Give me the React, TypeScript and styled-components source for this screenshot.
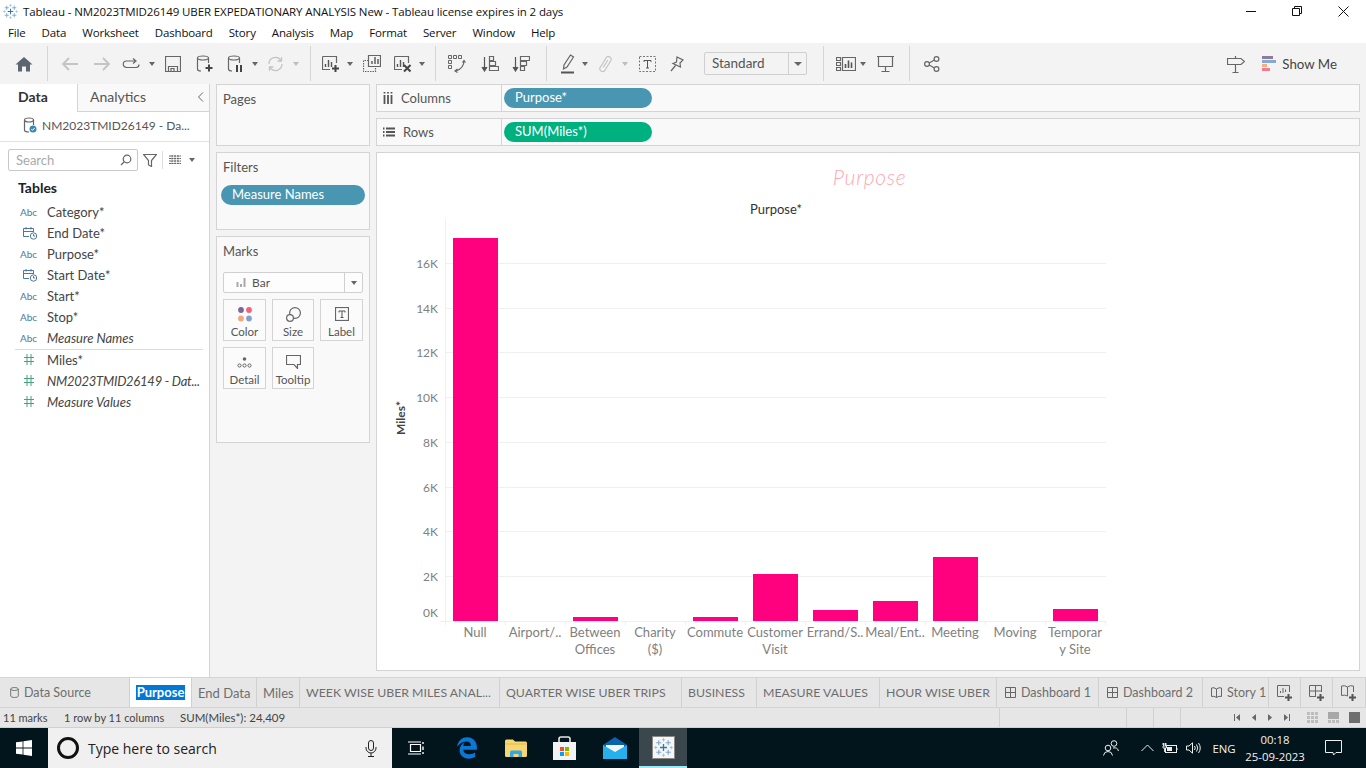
import React from 'react';
import styled, { createGlobalStyle } from 'styled-components';
import { FaEdgeLegacy } from 'react-icons/fa6';

const GlobalStyle = createGlobalStyle`
  html, body { margin: 0; padding: 0; background: #fff; overflow: hidden; }
  * { box-sizing: border-box; }
  svg { display: block; flex-shrink: 0; }
`;

const BOOK = `Lato, "Liberation Sans", sans-serif`;
const UI = `"Open Sans", "Noto Sans", sans-serif`;

const Page = styled.div`
  width: 1366px;
  height: 768px;
  display: flex;
  flex-direction: column;
  overflow: hidden;
  font-family: ${BOOK};
  color: #444;
`;

const TitleBar = styled.div`
  height: 22px;
  display: flex;
  align-items: center;
  padding-left: 3px;
  font-family: ${UI};
  font-size: 11.5px;
  letter-spacing: -0.1px;
  color: #111;
`;
const TitleText = styled.span`
  margin-left: 5px;
  white-space: nowrap;
`;
const WindowButtons = styled.div`
  margin-left: auto;
  display: flex;
  height: 22px;
`;
const WindowButton = styled.div`
  width: 46px;
  display: flex;
  align-items: center;
  justify-content: center;
`;
const MenuBar = styled.div`
  height: 21px;
  display: flex;
  align-items: center;
  gap: 16px;
  padding-left: 8px;
  font-family: ${UI};
  font-size: 11.5px;
  letter-spacing: -0.15px;
  color: #111;
`;
const Toolbar = styled.div`
  height: 41px;
  background: #f3f3f3;
  display: flex;
  align-items: center;
  padding-left: 8px;
`;
const Slot = styled.div<{ $w: number }>`
  width: ${p => p.$w}px;
  height: 24px;
  display: flex;
  align-items: center;
  justify-content: center;
  flex-shrink: 0;
`;
const Sep = styled.div<{ $w: number }>`
  width: ${p => p.$w}px;
  display: flex;
  justify-content: center;
  flex-shrink: 0;
  &::after {
    content: '';
    width: 1px;
    height: 35px;
    background: #d6d6d6;
  }
`;
const Caret = styled.div<{ $w: number; $off?: boolean }>`
  width: ${p => p.$w}px;
  display: flex;
  justify-content: center;
  flex-shrink: 0;
  &::after {
    content: '';
    border-left: 3.5px solid transparent;
    border-right: 3.5px solid transparent;
    border-top: 4px solid ${p => (p.$off ? '#bdbdbd' : '#666')};
  }
`;
const Dropdown = styled.div`
  width: 103px;
  height: 23px;
  margin: 0 0 0 11px;
  border: 1px solid #cfcfcf;
  border-radius: 2px;
  display: flex;
  align-items: center;
  font-size: 13.5px;
  color: #555;
  padding: 0 0 0 7px;
  flex-shrink: 0;
`;
const DropLabel = styled.span`
  flex: 1;
  padding-bottom: 1px;
`;
const DropArrow = styled.div`
  width: 18px;
  height: 21px;
  border-left: 1px solid #cfcfcf;
  display: flex;
  align-items: center;
  justify-content: center;
  &::after {
    content: '';
    border-left: 4px solid transparent;
    border-right: 4px solid transparent;
    border-top: 4px solid #666;
  }
`;
const ShowMe = styled.div`
  margin-left: auto;
  margin-right: 29px;
  display: flex;
  align-items: center;
  gap: 5px;
  font-size: 13.3px;
  color: #444;
`;

const Main = styled.div`
  height: 593px;
  display: flex;
  background: #f3f3f3;
`;
const DataPane = styled.div`
  width: 210px;
  background: #fff;
  border-right: 1px solid #d4d4d4;
  display: flex;
  flex-direction: column;
  flex-shrink: 0;
`;
const PaneTabs = styled.div`
  height: 28px;
  display: flex;
`;
const DataTab = styled.div`
  width: 77px;
  padding: 4px 0 0 18px;
  font-size: 14px;
  font-weight: 700;
  color: #333;
`;
const AnalyticsTab = styled.div`
  flex: 1;
  border-left: 1px solid #d4d4d4;
  border-bottom: 1px solid #d4d4d4;
  background: #f9f9f9;
  display: flex;
  justify-content: space-between;
  padding: 4px 5px 0 12px;
  font-size: 14px;
  color: #555;
`;
const CollapseMark = styled.svg`
  margin-top: 4px;
`;
const SourceRow = styled.div`
  height: 30px;
  border-bottom: 1px solid #e2e2e2;
  display: flex;
  align-items: center;
  gap: 5px;
  padding: 0 0 3px 23px;
  font-size: 12px;
  color: #555;
  white-space: nowrap;
`;
const SearchRow = styled.div`
  height: 29px;
  display: flex;
  align-items: center;
  padding: 7px 0 0 8px;
`;
const SearchBox = styled.div`
  width: 130px;
  height: 22px;
  border: 1px solid #c9c9c9;
  border-radius: 2px;
  display: flex;
  align-items: center;
  justify-content: space-between;
  padding: 0 5px 0 7px;
  font-size: 13px;
  color: #a9a9a9;
`;
const SearchDivider = styled.div`
  width: 1px;
  height: 18px;
  background: #ddd;
`;
const TablesTitle = styled.div`
  padding: 8px 0 0 18px;
  height: 30px;
  font-size: 14px;
  font-weight: 700;
  color: #222;
`;
const FieldRow = styled.div<{ $italic?: boolean; $tight?: boolean }>`
  height: 21px;
  display: flex;
  align-items: center;
  font-size: 13px;
  letter-spacing: ${p => (p.$tight ? '-0.25px' : '0')};
  color: #444;
  font-style: ${p => (p.$italic ? 'italic' : 'normal')};
  white-space: nowrap;
`;
const FieldIcon = styled.div<{ $inset: number }>`
  width: 47px;
  padding-left: ${p => p.$inset}px;
  flex-shrink: 0;
  display: flex;
  align-items: center;
`;
const AbcMark = styled.span`
  font-size: 10px;
  font-style: normal;
  letter-spacing: 0;
  color: #4a7a9c;
`;
const FieldDivider = styled.div`
  height: 1px;
  margin: 1px 6px -1px 15px;
  background: #dcdcdc;
`;

const ShelfColumn = styled.div`
  width: 154px;
  margin-left: 6px;
  display: flex;
  flex-direction: column;
  gap: 6px;
  flex-shrink: 0;
`;
const ShelfCard = styled.div<{ $h: number }>`
  height: ${p => p.$h}px;
  background: #f9f9f9;
  border: 1px solid #d4d4d4;
  padding: 0 4px;
`;
const CardTitle = styled.div`
  padding: 6px 0 0 2px;
  height: 32px;
  font-size: 13px;
  color: #555;
`;
const FilterPill = styled.div`
  height: 20px;
  border-radius: 10px;
  background: #4996b2;
  color: #fff;
  font-size: 13px;
  line-height: 19px;
  padding-left: 11px;
`;
const MarkSelect = styled.div`
  width: 140px;
  height: 21px;
  margin: 3px 0 6px 2px;
  border: 1px solid #d0d0d0;
  border-radius: 2px;
  background: #fdfdfd;
  display: flex;
  align-items: center;
  padding-left: 12px;
  gap: 6px;
  font-size: 12px;
  color: #555;
`;
const MarkArrow = styled.div`
  margin-left: auto;
  width: 18px;
  height: 19px;
  border-left: 1px solid #d0d0d0;
  display: flex;
  align-items: center;
  justify-content: center;
  &::after {
    content: '';
    border-left: 3.5px solid transparent;
    border-right: 3.5px solid transparent;
    border-top: 4px solid #666;
  }
`;
const MarkGrid = styled.div`
  display: grid;
  grid-template-columns: 43px 42px 43px;
  grid-auto-rows: 42px;
  column-gap: 6px;
  row-gap: 6px;
  margin-left: 2px;
`;
const MarkButton = styled.div`
  border: 1px solid #d4d4d4;
  background: #fbfbfb;
  display: flex;
  flex-direction: column;
  align-items: center;
  justify-content: flex-end;
  padding-bottom: 2px;
  font-size: 11.5px;
  color: #555;
`;
const MarkIcon = styled.div`
  height: 22px;
  display: flex;
  align-items: center;
  justify-content: center;
`;

const ViewColumn = styled.div`
  flex: 1;
  min-width: 0;
  margin: 0 6px;
  display: flex;
  flex-direction: column;
`;
const ShelfBar = styled.div<{ $mb: number }>`
  height: 28px;
  margin-bottom: ${p => p.$mb}px;
  background: #f9f9f9;
  border: 1px solid #d4d4d4;
  display: flex;
  flex-shrink: 0;
`;
const ShelfLabel = styled.div`
  width: 125px;
  border-right: 1px solid #d4d4d4;
  display: flex;
  align-items: center;
  gap: 8px;
  padding-left: 6px;
  font-size: 13px;
  color: #555;
`;
const ShelfPill = styled.div<{ $bg: string }>`
  width: 148px;
  height: 20px;
  margin: 3px 0 0 2px;
  border-radius: 10px;
  background: ${p => p.$bg};
  color: #fff;
  font-size: 13px;
  line-height: 19px;
  padding-left: 11px;
`;
const VizCard = styled.div`
  height: 519px;
  background: #fff;
  border: 1px solid #d4d4d4;
  display: flex;
  flex-direction: column;
`;
const VizTitle = styled.div`
  height: 44px;
  flex-shrink: 0;
  padding: 11px 0 0 3px;
  text-align: center;
  font-size: 21px;
  line-height: 26px;
  letter-spacing: 0.7px;
  font-style: italic;
  color: #ffa8b5;
  font-weight: 300;
`;

const TabBar = styled.div`
  height: 31px;
  background: #e6e6e6;
  border-top: 1px solid #d4d4d4;
  border-bottom: 1px solid #d4d4d4;
  display: flex;
`;
const SheetTab = styled.div<{ $w: number; $active?: boolean; $fs?: number; $pad?: number }>`
  width: ${p => p.$w}px;
  flex-shrink: 0;
  background: ${p => (p.$active ? '#fff' : 'transparent')};
  border-right: 1px solid #d0d0d0;
  display: flex;
  align-items: center;
  justify-content: ${p => (p.$pad === undefined ? 'center' : 'flex-start')};
  padding-left: ${p => p.$pad ?? 0}px;
  gap: 5px;
  font-size: ${p => p.$fs ?? 13}px;
  color: #6e6e6e;
  white-space: nowrap;
`;
const SelectedText = styled.span`
  background: #0078d7;
  color: #fff;
  padding: 0 1px;
  line-height: 15px;
  font-weight: 700;
  font-size: 13px;
`;
const StatusBar = styled.div`
  height: 20px;
  background: #e6e6e6;
  border-bottom: 1px solid #cfcfcf;
  display: flex;
  align-items: center;
  font-size: 11px;
  color: #444;
  white-space: nowrap;
`;
const StatusText = styled.span<{ $w: number; $pl?: number; $large?: boolean }>`
  width: ${p => p.$w}px;
  padding-left: ${p => p.$pl ?? 0}px;
  font-size: ${p => (p.$large ? '11.5px' : '11px')};
  flex-shrink: 0;
`;
const StatusCell = styled.div<{ $w: number }>`
  width: ${p => p.$w}px;
  height: 100%;
  border-left: 1px solid #d0d0d0;
  flex-shrink: 0;
`;
const StatusIcons = styled.div`
  display: flex;
  align-items: center;
  height: 100%;
`;
const ViewSizes = styled.div`
  display: flex;
  align-items: center;
  gap: 10px;
  margin-left: 13px;
`;

const Taskbar = styled.div`
  height: 40px;
  background: #03151c;
  display: flex;
  align-items: center;
`;
const StartButton = styled.div`
  width: 48px;
  display: flex;
  justify-content: center;
`;
const TaskSearch = styled.div`
  width: 344px;
  height: 40px;
  background: #f0f0f0;
  display: flex;
  align-items: center;
  padding: 0 15px 0 9px;
  font-family: ${UI};
  font-size: 14px;
  color: #222;
`;
const Cortana = styled.div`
  width: 22px;
  height: 22px;
  border: 3px solid #111;
  border-radius: 50%;
  margin: 0 9px 0 0;
  flex-shrink: 0;
`;
const MicSlot = styled.div`
  margin-left: auto;
`;
const TaskSlot = styled.div<{ $w: number; $active?: boolean }>`
  width: ${p => p.$w}px;
  height: 40px;
  display: flex;
  align-items: center;
  justify-content: center;
  flex-shrink: 0;
  background: ${p => (p.$active ? '#3a474d' : 'transparent')};
  border-bottom: ${p => (p.$active ? '2px solid #9be8f8' : 'none')};
`;
const Tray = styled.div`
  margin-left: auto;
  margin-right: 12px;
  display: flex;
  align-items: center;
  color: #f2f2f2;
  font-family: ${UI};
  font-size: 11.4px;
`;
const TraySlot = styled.div<{ $w: number; $ml?: number }>`
  width: ${p => p.$w}px;
  margin-left: ${p => p.$ml ?? 0}px;
  display: flex;
  flex-direction: column;
  align-items: center;
  justify-content: center;
  line-height: 17px;
  flex-shrink: 0;
`;

const S = { fill: 'none', stroke: '#666', strokeWidth: 1.2 };

const Logo = ({ size }: { size: number }) => {
  const c = size / 2;
  const u = size / 16;
  const cross = (x: number, y: number, r: number, color: string, w: number) => (
    <path key={`${x}${y}`} d={`M${x - r} ${y}H${x + r}M${x} ${y - r}V${y + r}`} stroke={color} strokeWidth={w} />
  );
  const outer = [[4, 4], [12, 4], [4, 12], [12, 12]];
  const sides = [[1.5, 8], [14.5, 8], [8, 1.5], [8, 14.5]];
  return (
    <svg width={size} height={size}>
      {outer.map(([x, y]) => cross(x * u, y * u, 2.2 * u, '#7fa9cf', u))}
      {sides.map(([x, y]) => cross(x * u, y * u, 1.4 * u, '#9cc0dc', u * 0.8))}
      {cross(c, c, 3 * u, '#2f78b5', u * 1.1)}
    </svg>
  );
};

const HomeIcon = () => (
  <svg width="18" height="16"><path d="M9 1L0.5 8.5H3V15.5H7V10.5H11V15.5H15V8.5H17.5Z" fill="#5c6670" /></svg>
);
const ArrowIcon = ({ forward }: { forward?: boolean }) => (
  <svg width="18" height="14">
    <path d={forward ? 'M1 7H16M10 1L16 7L10 13' : 'M17 7H2M8 1L2 7L8 13'} fill="none" stroke="#c4c4c4" strokeWidth="1.8" />
  </svg>
);
const RedoIcon = () => (
  <svg width="18" height="12"><path d="M13 3H4.5A3 3 0 0 0 4.5 9.5H14A3 3 0 0 0 17 6.5M11 0.5L14 3L11 5.5" {...S} /></svg>
);
const SaveIcon = () => (
  <svg width="16" height="16"><path d="M0.5 0.5H15.5V15.5H0.5ZM3.5 15V10.5H12.5V15M6 15V12.5H9V15" {...S} /></svg>
);
const Plus = ({ x, y, r = 3.5 }: { x: number; y: number; r?: number }) => (
  <path d={`M${x - r} ${y}H${x + r}M${x} ${y - r}V${y + r}`} stroke="#444" strokeWidth="2" fill="none" />
);
const CylinderIcon = ({ pause }: { pause?: boolean }) => (
  <svg width="18" height="18">
    <ellipse cx="7" cy="3" rx="5.5" ry="2" {...S} />
    <path d="M1.5 3V14Q1.5 16 5 16M12.5 3V8" {...S} />
    {pause ? <path d="M10 10V17M14 10V17" stroke="#444" strokeWidth="2" /> : <Plus x={13} y={13} />}
  </svg>
);
const RefreshIcon = () => (
  <svg width="17" height="16">
    <path d="M2 8A6.5 6.5 0 0 1 14 4.5M15 8A6.5 6.5 0 0 1 3 11.5M14.5 1V5H10.5M2.5 15V11H6.5" fill="none" stroke="#c4c4c4" strokeWidth="1.3" />
  </svg>
);
const Bars = ({ x, y }: { x: number; y: number }) => (
  <path d={`M${x} ${y}V${y - 3}M${x + 3} ${y}V${y - 7}M${x + 6} ${y}V${y - 5}`} stroke="#555" strokeWidth="1.4" />
);
const NewSheetIcon = () => (
  <svg width="18" height="18">
    <path d="M0.5 1.5H14.5V8M0.5 1.5V14.5H8" {...S} />
    <Bars x={3.5} y={12} />
    <Plus x={13.5} y={13.5} />
  </svg>
);
const DuplicateIcon = () => (
  <svg width="18" height="17">
    <path d="M5.5 0.5H17.5V11.5H5.5Z" {...S} fill="#f3f3f3" />
    <path d="M5.5 5.5H0.5V16.5H12.5V11.5" {...S} strokeDasharray="1.5 1" />
    <Bars x={9} y={9} />
  </svg>
);
const ClearSheetIcon = () => (
  <svg width="18" height="18">
    <path d="M0.5 1.5H14.5V8M0.5 1.5V14.5H8" {...S} />
    <Bars x={3.5} y={12} />
    <path d="M10 10L16.5 16.5M16.5 10L10 16.5" stroke="#444" strokeWidth="2" />
  </svg>
);
const SwapIcon = () => (
  <svg width="18" height="18">
    <path d="M0.5 0.5h3v3h-3zM5.5 0.5h3v3h-3zM10.5 0.5h3v3h-3zM0.5 5.5h3v3h-3zM0.5 10.5h3v3h-3z" {...S} strokeWidth={1} />
    <path d="M16 6Q16 13 8 16M14.5 7.5L16 5.5L17.5 7.5M9.5 14L7 16L9.5 17.5" {...S} />
  </svg>
);
const SortAscIcon = () => (
  <svg width="18" height="16">
    <path d="M3.5 1V13M1 11L3.5 15L6 11" stroke="#555" strokeWidth="1.2" fill="#555" />
    <path d="M8.5 0.5H12.5V4.5H8.5ZM8.5 5.5H14.5V9.5H8.5ZM8.5 10.5H17.5V14.5H8.5Z" {...S} />
  </svg>
);
const SortDescIcon = () => (
  <svg width="18" height="16">
    <path d="M3.5 1V13M1 11L3.5 15L6 11" stroke="#555" strokeWidth="1.2" fill="#555" />
    <path d="M8.5 0.5H17.5V4.5H8.5ZM8.5 5.5H14.5V9.5H8.5ZM8.5 10.5H12.5V14.5H8.5Z" {...S} />
  </svg>
);
const PenIcon = () => (
  <svg width="14" height="20">
    <path d="M9.5 1L12.5 3L6 13L2.5 15L3 11Z" {...S} />
    <path d="M0 18.5H13" stroke="#555" strokeWidth="2" />
  </svg>
);
const ClipIcon = () => (
  <svg width="15" height="18">
    <path d="M2.5 12L8 3A2.7 2.7 0 0 1 12.8 5.8L6.8 15.5A2.4 2.4 0 0 1 2.5 12M5.2 12.5L9.8 5" fill="none" stroke="#c4c4c4" strokeWidth="1.2" />
  </svg>
);
const TextBoxIcon = () => (
  <svg width="17" height="16">
    <rect x="0.5" y="0.5" width="16" height="15" fill="none" stroke="#777" strokeDasharray="2 1.5" />
    <path d="M5 4.5H12M8.5 4.5V12M7 12H10M5 4.5V6M12 4.5V6" stroke="#555" fill="none" />
  </svg>
);
const PinIcon = () => (
  <svg width="14" height="16">
    <path d="M7 1L13 4L10 7L10.5 11L3 7.5L6.5 6ZM5.5 9.5L1 15" {...S} />
  </svg>
);
const ShowMeSmallIcon = () => (
  <svg width="20" height="14">
    <path d="M0.5 0.5h4v3h-4zM0.5 5.5h4v3h-4zM0.5 10.5h4v3h-4zM6.5 0.5H19.5V13.5H6.5Z" {...S} />
    <path d="M9.5 11V7M12.5 11V3.5M15.5 11V5.5" stroke="#555" strokeWidth="1.6" />
  </svg>
);
const PresentIcon = () => (
  <svg width="17" height="16">
    <path d="M0 0.5H17M1.5 0.5V10.5H15.5V0.5M8.5 10.5V15M4.5 15.5H12.5" {...S} />
  </svg>
);
const ShareIcon = () => (
  <svg width="16" height="16">
    <circle cx="3" cy="8" r="2.4" {...S} />
    <circle cx="12.5" cy="3" r="2.4" {...S} />
    <circle cx="12.5" cy="13" r="2.4" {...S} />
    <path d="M5.2 7L10.4 4.1M5.2 9L10.4 11.9" {...S} />
  </svg>
);
const GuideIcon = () => (
  <svg width="18" height="18">
    <path d="M0.5 3.5H14L17.5 6.5L14 9.5H0.5ZM8.5 1V3.5M8.5 9.5V17M5.5 17.5H11.5" {...S} />
  </svg>
);
const ShowMeIcon = () => (
  <svg width="15" height="16">
    <rect y="0" width="11" height="3" fill="#8c7ba3" />
    <rect y="4" width="14" height="3" fill="#86a9d0" />
    <rect y="8" width="5" height="3" fill="#f5ae7f" />
    <rect y="12" width="8" height="3" fill="#f47b8b" />
  </svg>
);
const SourceIcon = () => (
  <svg width="14" height="16">
    <ellipse cx="6" cy="3" rx="4.5" ry="2" {...S} />
    <path d="M1.5 3V13Q1.5 15 6 15M10.5 3V8" {...S} />
    <circle cx="10" cy="12" r="3.5" fill="#3a87b5" />
    <path d="M8.3 12L9.6 13.3L11.8 10.8" stroke="#fff" fill="none" />
  </svg>
);
const TabSourceIcon = () => (
  <svg width="9" height="11">
    <ellipse cx="4.5" cy="2" rx="3.8" ry="1.5" fill="none" stroke="#777" />
    <path d="M0.7 2V9Q0.7 10.5 4.5 10.5Q8.3 10.5 8.3 9V2" fill="none" stroke="#777" />
  </svg>
);
const SearchGlass = () => (
  <svg width="12" height="12"><circle cx="7" cy="5" r="3.8" {...S} /><path d="M4 8L1 11" {...S} /></svg>
);
const FunnelIcon = () => (
  <svg width="14" height="13"><path d="M0.5 0.5H13.5L8.5 6.5V12.5L5.5 11V6.5Z" {...S} /></svg>
);
const ListGridIcon = () => (
  <svg width="12" height="10">
    <path d="M0 1H12M0 3.5H12M0 6H12M0 8.5H12M3 0V9M6 0V9M9 0V9" stroke="#666" strokeWidth="1" strokeDasharray="2 0.6" />
  </svg>
);
const DateIcon = () => (
  <svg width="15" height="14">
    <path d="M0.5 2.5H10.5V6M0.5 2.5V10.5H6M0.5 5.5H10M3 1V3.5M8 1V3.5" stroke="#4a7a9c" fill="none" />
    <circle cx="10.5" cy="10" r="3.2" fill="#fff" stroke="#4a7a9c" />
    <path d="M10.5 8.2V10H12.2" stroke="#4a7a9c" fill="none" />
  </svg>
);
const HashIcon = () => (
  <svg width="10" height="11">
    <path d="M3 0V11M7 0V11M0 3.5H10M0 7.5H10" stroke="#49a080" strokeWidth="1" />
  </svg>
);
const ColumnsIcon = () => (
  <svg width="10" height="12"><path d="M1.5 3V12M5 3V12M8.5 3V12M1.5 0V1.5M5 0V1.5M8.5 0V1.5" stroke="#555" strokeWidth="1.8" /></svg>
);
const RowsIcon = () => (
  <svg width="12" height="10"><path d="M3 1.5H12M3 5H12M3 8.5H12M0 1.5H1.5M0 5H1.5M0 8.5H1.5" stroke="#555" strokeWidth="1.8" /></svg>
);
const BarMarkIcon = () => (
  <svg width="10" height="9"><path d="M1.5 9V4M5 9V6M8.5 9V0" stroke="#aaa" strokeWidth="2" /></svg>
);
const ColorIcon = () => (
  <svg width="14" height="15">
    <circle cx="3" cy="3" r="2.9" fill="#7a6699" /><circle cx="11" cy="3" r="2.9" fill="#f2637a" />
    <circle cx="3" cy="11.5" r="2.9" fill="#f2a77c" /><circle cx="11" cy="11.5" r="2.9" fill="#7fa3cf" />
  </svg>
);
const SizeIcon = () => (
  <svg width="15" height="15"><circle cx="9" cy="6" r="5.4" {...S} /><circle cx="4" cy="11" r="3.4" {...S} fill="#fbfbfb" /></svg>
);
const LabelIcon = () => (
  <svg width="14" height="14">
    <rect x="0.5" y="0.5" width="13" height="13" {...S} />
    <path d="M4 4H10M7 4V10.5M5.5 10.5H8.5M4 4V5.5M10 4V5.5" stroke="#555" fill="none" />
  </svg>
);
const DetailIcon = () => (
  <svg width="15" height="11">
    <circle cx="7.5" cy="2" r="1.8" fill="#666" />
    <circle cx="2.5" cy="8.5" r="1.6" {...S} strokeWidth={1} /><circle cx="7.5" cy="8.5" r="1.6" {...S} strokeWidth={1} /><circle cx="12.5" cy="8.5" r="1.6" {...S} strokeWidth={1} />
  </svg>
);
const TooltipIcon = () => (
  <svg width="15" height="14"><path d="M0.5 0.5H14.5V9.5H11.5V13.5L8 9.5H0.5Z" {...S} /></svg>
);
const SheetGlyph = () => (
  <svg width="11" height="11"><path d="M0.5 0.5H10.5V10.5H0.5ZM0.5 5.5H10.5M5.5 0.5V10.5" fill="none" stroke="#666" /></svg>
);
const StoryGlyph = () => (
  <svg width="11" height="11"><path d="M5.5 2Q3 0 0.5 1V9.5Q3 8.5 5.5 10.5Q8 8.5 10.5 9.5V1Q8 0 5.5 2ZM5.5 2V10.5" fill="none" stroke="#666" /></svg>
);
const TabPlus = ({ kind }: { kind: 'sheet' | 'dash' | 'story' }) => (
  <svg width="16" height="16">
    {kind === 'sheet' && <path d="M0.5 0.5H12.5V7M0.5 0.5V11.5H7" fill="none" stroke="#666" />}
    {kind === 'sheet' && <path d="M3.5 8V6M6 8V3M8.5 7V4.5" stroke="#666" />}
    {kind === 'dash' && <path d="M0.5 0.5H12.5V7M0.5 0.5V11.5H7M0.5 6H12M6.5 0.5V11" fill="none" stroke="#666" />}
    {kind === 'story' && <path d="M6.5 2Q4 0 0.5 1V10.5Q4 9.5 6.5 11V2Q9 0 12.5 1V7" fill="none" stroke="#666" />}
    <path d="M8 12.5H15M11.5 9V16" stroke="#555" strokeWidth="2" />
  </svg>
);
const NavIcon = ({ dir, edge }: { dir: 'left' | 'right'; edge?: boolean }) => (
  <svg width="16" height="9">
    <g transform={dir === 'right' ? 'translate(16 0) scale(-1 1)' : undefined}>
      <path d="M6 4.5L10 1V8Z" fill="#666" />
      {edge && <path d="M4.5 1V8" stroke="#666" />}
    </g>
  </svg>
);
const ViewSizeIcon = ({ kind }: { kind: number }) => (
  <svg width="11" height="11">
    {kind === 0 &&
      [0, 4, 8].map(x => [0, 4, 8].map(y => <rect key={`${x}-${y}`} x={x} y={y} width="3" height="3" fill="#bdbdbd" />))}
    {kind === 1 && (
      <>
        <rect width="11" height="7" fill="#a8a8a8" />
        <rect y="8" width="3" height="3" fill="#bdbdbd" /><rect x="4" y="8" width="3" height="3" fill="#bdbdbd" /><rect x="8" y="8" width="3" height="3" fill="#bdbdbd" />
      </>
    )}
    {kind === 2 && <rect width="11" height="11" fill="#6e6e6e" />}
  </svg>
);
const WinLogo = () => (
  <svg width="16" height="16"><path d="M0 2.3L6.6 1.4V7.6H0ZM7.4 1.3L16 0V7.6H7.4ZM0 8.4H6.6V14.6L0 13.7ZM7.4 8.4H16V16L7.4 14.7Z" fill="#fff" /></svg>
);
const MicIcon = () => (
  <svg width="12" height="17"><rect x="3.5" y="0.5" width="5" height="10" rx="2.5" fill="none" stroke="#222" /><path d="M1 7V8A5 5 0 0 0 11 8V7M6 13V16.5M3 16.5H9" fill="none" stroke="#222" /></svg>
);
const TaskViewIcon = () => (
  <svg width="16" height="14"><path d="M2.5 3.5H12.5V10.5H2.5ZM0 1H13M0 13H13" fill="none" stroke="#fff" strokeWidth="1.2" /><path d="M15 1V3M15 5.5V9M15 11V13" stroke="#fff" strokeWidth="1.4" /></svg>
);
const FolderIcon = () => (
  <svg width="22" height="18">
    <path d="M0 2Q0 0.5 1.5 0.5H8L10 2.5H20.5Q22 2.5 22 4V16.5Q22 18 20.5 18H1.5Q0 18 0 16.5Z" fill="#f7d774" />
    <path d="M0 5H22" stroke="#e6b93e" />
    <path d="M5 18V13Q5 11.5 6.5 11.5H15.5Q17 11.5 17 13V18H13.5V15H8.5V18Z" fill="#35a8e0" />
  </svg>
);
const StoreIcon = () => (
  <svg width="23" height="24">
    <path d="M6 7V3Q6 1 8 1H15Q17 1 17 3V7" fill="none" stroke="#e8e8e8" strokeWidth="1.6" />
    <rect y="6" width="23" height="18" fill="#f3f3f3" />
    <rect x="7" y="11" width="4" height="4" fill="#f25022" /><rect x="12" y="11" width="4" height="4" fill="#7fba00" />
    <rect x="7" y="16" width="4" height="4" fill="#00a4ef" /><rect x="12" y="16" width="4" height="4" fill="#ffb900" />
  </svg>
);
const MailIcon = () => (
  <svg width="24" height="22">
    <path d="M0 8L12 0L24 8V22H0Z" fill="#0a62ad" />
    <path d="M3 8H21V13L12 18L3 13Z" fill="#f4f4f4" />
    <path d="M0 8L12 15L24 8V22H0Z" fill="#25b1ee" />
  </svg>
);
const TaskLogo = styled.div`
  width: 23px;
  height: 23px;
  background: #f6f6f6;
  border: 1px solid #888;
  display: flex;
  align-items: center;
  justify-content: center;
`;
const PeopleIcon = () => (
  <svg width="16" height="16"><circle cx="5" cy="8" r="2.8" fill="none" stroke="#eee" /><path d="M0.5 15.5Q1 11.5 5 11.5Q9 11.5 9.5 15.5" fill="none" stroke="#eee" /><circle cx="11" cy="3.5" r="2.8" fill="none" stroke="#eee" /><path d="M10 8Q14.5 7 15.5 11" fill="none" stroke="#eee" /></svg>
);
const ChevronUp = () => (
  <svg width="13" height="8"><path d="M0.5 7L6.5 1L12.5 7" fill="none" stroke="#eee" /></svg>
);
const BatteryIcon = () => (
  <svg width="16" height="11"><rect x="3.5" y="2.5" width="11" height="7" fill="none" stroke="#eee" /><rect x="5" y="4" width="5" height="4" fill="#eee" /><path d="M15 5V7" stroke="#eee" /><path d="M0 1H5M1.5 0V3M3.5 0V3M1 3H4.5V5H1ZM2.5 5V9" stroke="#eee" fill="#03151c" strokeWidth=".9" /></svg>
);
const VolumeIcon = () => (
  <svg width="16" height="12"><path d="M0.5 4H3L6.5 0.8V11.2L3 8H0.5Z" fill="none" stroke="#eee" /><path d="M8.5 4Q10 6 8.5 8M10.5 2.5Q13 6 10.5 9.5M12.5 1Q16 6 12.5 11" fill="none" stroke="#eee" /></svg>
);
const NoticeIcon = () => (
  <svg width="17" height="16"><path d="M0.5 0.5H16.5V12.5H11L8.5 15L8 12.5H0.5Z" fill="none" stroke="#eee" /></svg>
);

const fields = [
  { name: 'Category*', type: 'abc' },
  { name: 'End Date*', type: 'date' },
  { name: 'Purpose*', type: 'abc' },
  { name: 'Start Date*', type: 'date' },
  { name: 'Start*', type: 'abc' },
  { name: 'Stop*', type: 'abc' },
  { name: 'Measure Names', type: 'abc', italic: true },
];
const measures = [
  { name: 'Miles*' },
  { name: 'NM2023TMID26149 - Dat...', italic: true, tight: true },
  { name: 'Measure Values', italic: true },
];
const ticks = [
  { label: '16K', y: 263 }, { label: '14K', y: 308 }, { label: '12K', y: 352 },
  { label: '10K', y: 397 }, { label: '8K', y: 442 }, { label: '6K', y: 487 },
  { label: '4K', y: 531 }, { label: '2K', y: 576 },
];
const BASE = 621;
const categories = [
  { lines: ['Null'], top: 238 },
  { lines: ['Airport/..'] },
  { lines: ['Between', 'Offices'], top: 617 },
  { lines: ['Charity', '($)'] },
  { lines: ['Commute'], top: 617 },
  { lines: ['Customer', 'Visit'], top: 574 },
  { lines: ['Errand/S..'], top: 610 },
  { lines: ['Meal/Ent..'], top: 601 },
  { lines: ['Meeting'], top: 557 },
  { lines: ['Moving'] },
  { lines: ['Temporar', 'y Site'], top: 609 },
];
const sheetTabs = [
  { label: 'End Data', w: 65 },
  { label: 'Miles', w: 43 },
  { label: 'WEEK WISE UBER MILES ANAL...', w: 200, fs: 12.3 },
  { label: 'QUARTER WISE UBER TRIPS', w: 182, fs: 12.3 },
  { label: 'BUSINESS', w: 75, fs: 12.3 },
  { label: 'MEASURE VALUES', w: 123, fs: 12.3 },
  { label: 'HOUR WISE UBER', w: 117, fs: 12.3 },
];

const Chart = () => (
  <svg width="981" height="473" fontFamily={BOOK} fontSize="12">
    <g transform="translate(-377 -197)">
      <text x="776" y="214" textAnchor="middle" fill="#333" fontSize="13">Purpose*</text>
      <path d="M445.5 219V625" stroke="#f0f0f0" />
      {ticks.map(t => (
        <g key={t.label}>
          <path d={`M445 ${t.y + 0.5}H1106`} stroke="#f0f0f0" />
          <text x="438" y={t.y + 5} textAnchor="end" fill="#808080">{t.label}</text>
        </g>
      ))}
      <path d={`M440 ${BASE + 0.5}H1106`} stroke="#efefef" />
      <text x="438" y={BASE - 4} textAnchor="end" fill="#808080">0K</text>
      <text transform="translate(405 418) rotate(-90)" textAnchor="middle" fill="#444" fontWeight="700">Miles*</text>
      {categories.map((c, i) => {
        const x = 445 + i * 60;
        return (
          <g key={c.lines[0]}>
            <path d={`M${x + 60.5} ${BASE}V${BASE + 4}`} stroke="#efefef" />
            {c.top !== undefined && <rect x={x + 8} y={c.top} width="45" height={BASE - c.top} fill="#ff007f" />}
            {c.lines.map((line, n) => (
              <text key={line} x={x + 30} y={637 + n * 17} textAnchor="middle" fill="#808080" fontSize="13">{line}</text>
            ))}
          </g>
        );
      })}
    </g>
  </svg>
);

export default function App() {
  return (
    <Page>
      <GlobalStyle />
      <TitleBar>
        <Logo size={15} />
        <TitleText>Tableau - NM2023TMID26149 UBER EXPEDATIONARY ANALYSIS New - Tableau license expires in 2 days</TitleText>
        <WindowButtons>
          <WindowButton>
            <svg width="10" height="1"><path d="M0 0.5H10" stroke="#111" /></svg>
          </WindowButton>
          <WindowButton>
            <svg width="10" height="10"><path d="M0.5 2.5H7.5V9.5H0.5ZM2.5 2.5V0.5H9.5V7.5H7.5" fill="none" stroke="#111" /></svg>
          </WindowButton>
          <WindowButton>
            <svg width="11" height="11"><path d="M0.5 0.5L10.5 10.5M10.5 0.5L0.5 10.5" stroke="#111" /></svg>
          </WindowButton>
        </WindowButtons>
      </TitleBar>
      <MenuBar>
        {['File', 'Data', 'Worksheet', 'Dashboard', 'Story', 'Analysis', 'Map', 'Format', 'Server', 'Window', 'Help'].map(m => (
          <span key={m}>{m}</span>
        ))}
      </MenuBar>
      <Toolbar>
        <Slot $w={32}><HomeIcon /></Slot>
        <Sep $w={14} />
        <Slot $w={32}><ArrowIcon /></Slot>
        <Slot $w={32}><ArrowIcon forward /></Slot>
        <Slot $w={26}><RedoIcon /></Slot>
        <Caret $w={16} />
        <Slot $w={26}><SaveIcon /></Slot>
        <Slot $w={38}><CylinderIcon /></Slot>
        <Slot $w={24}><CylinderIcon pause /></Slot>
        <Caret $w={14} />
        <Slot $w={26}><RefreshIcon /></Slot>
        <Caret $w={16} $off />
        <Sep $w={13} />
        <Slot $w={28}><NewSheetIcon /></Slot>
        <Caret $w={10} />
        <Slot $w={34}><DuplicateIcon /></Slot>
        <Slot $w={28}><ClearSheetIcon /></Slot>
        <Caret $w={10} />
        <Sep $w={16} />
        <Slot $w={28}><SwapIcon /></Slot>
        <Slot $w={38}><SortAscIcon /></Slot>
        <Slot $w={24}><SortDescIcon /></Slot>
        <Sep $w={26} />
        <Slot $w={18}><PenIcon /></Slot>
        <Caret $w={16} />
        <Slot $w={24}><ClipIcon /></Slot>
        <Caret $w={16} $off />
        <Slot $w={28}><TextBoxIcon /></Slot>
        <Slot $w={32}><PinIcon /></Slot>
        <Dropdown>
          <DropLabel>Standard</DropLabel>
          <DropArrow />
        </Dropdown>
        <Sep $w={32} />
        <Slot $w={14}><ShowMeSmallIcon /></Slot>
        <Caret $w={20} />
        <Slot $w={24}><PresentIcon /></Slot>
        <Sep $w={24} />
        <Slot $w={22}><ShareIcon /></Slot>
        <ShowMe>
          <Slot $w={42}><GuideIcon /></Slot>
          <ShowMeIcon />
          <span>Show Me</span>
        </ShowMe>
      </Toolbar>
      <Main>
        <DataPane>
          <PaneTabs>
            <DataTab>Data</DataTab>
            <AnalyticsTab>
              Analytics
              <CollapseMark width="7" height="10"><path d="M6 0.5L1.5 5L6 9.5" fill="none" stroke="#666" /></CollapseMark>
            </AnalyticsTab>
          </PaneTabs>
          <SourceRow>
            <SourceIcon />
            NM2023TMID26149 - Da...
          </SourceRow>
          <SearchRow>
            <SearchBox>
              Search
              <SearchGlass />
            </SearchBox>
            <Slot $w={24}><FunnelIcon /></Slot>
            <SearchDivider />
            <Slot $w={23}><ListGridIcon /></Slot>
            <Caret $w={12} />
          </SearchRow>
          <TablesTitle>Tables</TablesTitle>
          {fields.map(f => (
            <FieldRow key={f.name} $italic={f.italic}>
              {f.type === 'abc' ? (
                <FieldIcon $inset={20}><AbcMark>Abc</AbcMark></FieldIcon>
              ) : (
                <FieldIcon $inset={23}><DateIcon /></FieldIcon>
              )}
              {f.name}
            </FieldRow>
          ))}
          <FieldDivider />
          {measures.map(f => (
            <FieldRow key={f.name} $italic={f.italic} $tight={f.tight}>
              <FieldIcon $inset={24}><HashIcon /></FieldIcon>
              {f.name}
            </FieldRow>
          ))}
        </DataPane>
        <ShelfColumn>
          <ShelfCard $h={62}><CardTitle>Pages</CardTitle></ShelfCard>
          <ShelfCard $h={78}>
            <CardTitle>Filters</CardTitle>
            <FilterPill>Measure Names</FilterPill>
          </ShelfCard>
          <ShelfCard $h={207}>
            <CardTitle>Marks</CardTitle>
            <MarkSelect>
              <BarMarkIcon />
              Bar
              <MarkArrow />
            </MarkSelect>
            <MarkGrid>
              <MarkButton><MarkIcon><ColorIcon /></MarkIcon>Color</MarkButton>
              <MarkButton><MarkIcon><SizeIcon /></MarkIcon>Size</MarkButton>
              <MarkButton><MarkIcon><LabelIcon /></MarkIcon>Label</MarkButton>
              <MarkButton><MarkIcon><DetailIcon /></MarkIcon>Detail</MarkButton>
              <MarkButton><MarkIcon><TooltipIcon /></MarkIcon>Tooltip</MarkButton>
            </MarkGrid>
          </ShelfCard>
        </ShelfColumn>
        <ViewColumn>
          <ShelfBar $mb={6}>
            <ShelfLabel><ColumnsIcon />Columns</ShelfLabel>
            <ShelfPill $bg="#4996b2">Purpose*</ShelfPill>
          </ShelfBar>
          <ShelfBar $mb={6}>
            <ShelfLabel><RowsIcon />Rows</ShelfLabel>
            <ShelfPill $bg="#00b180">SUM(Miles*)</ShelfPill>
          </ShelfBar>
          <VizCard>
            <VizTitle>Purpose</VizTitle>
            <Chart />
          </VizCard>
        </ViewColumn>
      </Main>
      <TabBar>
        <SheetTab $w={130} $pad={10} $fs={12.5}>
          <TabSourceIcon />
          Data Source
        </SheetTab>
        <SheetTab $w={62} $active><SelectedText>Purpose</SelectedText></SheetTab>
        {sheetTabs.map(t => (
          <SheetTab key={t.label} $w={t.w} $pad={6} $fs={t.fs}>{t.label}</SheetTab>
        ))}
        <SheetTab $w={102} $pad={8} $fs={12.5}><SheetGlyph />Dashboard 1</SheetTab>
        <SheetTab $w={104} $pad={8} $fs={12.5}><SheetGlyph />Dashboard 2</SheetTab>
        <SheetTab $w={66} $pad={8} $fs={12.5}><StoryGlyph />Story 1</SheetTab>
        <SheetTab $w={32}><TabPlus kind="sheet" /></SheetTab>
        <SheetTab $w={32}><TabPlus kind="dash" /></SheetTab>
        <SheetTab $w={33}><TabPlus kind="story" /></SheetTab>
      </TabBar>
      <StatusBar>
        <StatusText $w={64} $pl={3}>11 marks</StatusText>
        <StatusText $w={116}>1 row by 11 columns</StatusText>
        <StatusText $w={819} $large>SUM(Miles*): 24,409</StatusText>
        <StatusCell $w={127} />
        <StatusCell $w={27} />
        <StatusCell $w={27} />
        <StatusCell $w={50} />
        <StatusIcons>
          <NavIcon dir="left" edge />
          <NavIcon dir="left" />
          <NavIcon dir="right" />
          <NavIcon dir="right" edge />
          <ViewSizes>
            <ViewSizeIcon kind={0} />
            <ViewSizeIcon kind={1} />
            <ViewSizeIcon kind={2} />
          </ViewSizes>
        </StatusIcons>
      </StatusBar>
      <Taskbar>
        <StartButton><WinLogo /></StartButton>
        <TaskSearch>
          <Cortana />
          Type here to search
          <MicSlot><MicIcon /></MicSlot>
        </TaskSearch>
        <TaskSlot $w={48}><TaskViewIcon /></TaskSlot>
        <TaskSlot $w={54}><FaEdgeLegacy size={22} color="#0a78d4" /></TaskSlot>
        <TaskSlot $w={44}><FolderIcon /></TaskSlot>
        <TaskSlot $w={52}><StoreIcon /></TaskSlot>
        <TaskSlot $w={49}><MailIcon /></TaskSlot>
        <TaskSlot $w={48} $active><TaskLogo><Logo size={19} /></TaskLogo></TaskSlot>
        <Tray>
          <TraySlot $w={30}><PeopleIcon /></TraySlot>
          <TraySlot $w={30} $ml={6}><ChevronUp /></TraySlot>
          <TraySlot $w={16}><BatteryIcon /></TraySlot>
          <TraySlot $w={32}><VolumeIcon /></TraySlot>
          <TraySlot $w={28}>ENG</TraySlot>
          <TraySlot $w={74}><span>00:18</span><span>25-09-2023</span></TraySlot>
          <TraySlot $w={42}><NoticeIcon /></TraySlot>
        </Tray>
      </Taskbar>
    </Page>
  );
}
